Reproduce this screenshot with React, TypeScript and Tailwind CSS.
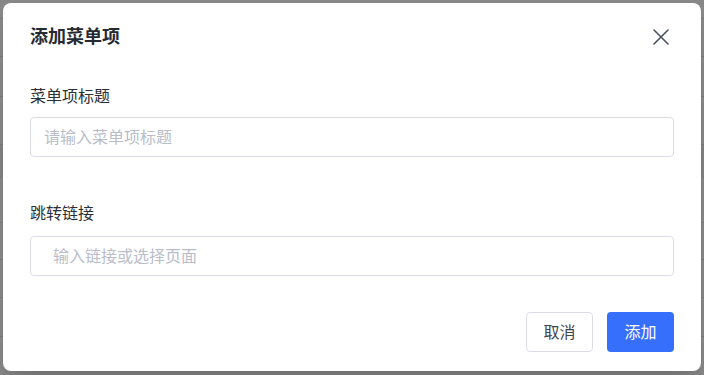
import { useState } from "react";

const font = { fontFamily: '"Inter", "Noto Sans CJK SC", sans-serif' };

function CloseIcon() {
  return (
    <svg width="16" height="16" viewBox="0 0 16 16" fill="none" stroke="currentColor" strokeWidth="1.6" strokeLinecap="round">
      <path d="M1 1L15 15M15 1L1 15" />
    </svg>
  );
}

export default function App() {
  const [title, setTitle] = useState("");
  const [link, setLink] = useState("");

  return (
    <div className="relative h-[375px] w-[704px] overflow-hidden bg-white" style={font}>
      {/* page behind the modal */}
      <div className="flex flex-col">
        <div className="h-[19px] border-b border-gray-200" />
        <div className="h-[38px] border-b border-gray-200" />
        <div className="h-[40px] border-b border-gray-200" />
        <div className="h-[48px] border-b border-gray-200" />
        <div className="h-[33px] bg-gray-100 border-b border-gray-200" />
        <div className="h-[45px] border-b border-gray-200" />
        <div className="h-[37px] border-b border-gray-200" />
        <div className="h-[38px] border-b border-gray-200" />
        <div className="h-[39px] border-b border-gray-200" />
      </div>
      <div className="absolute inset-0 bg-black/[0.47]" />

      <div className="absolute inset-0 p-[3px] pb-[4px]">
        <div className="flex h-full flex-col rounded-lg bg-white px-[27px] pt-[20px] pb-[19px] shadow-xl">
          <div className="flex items-center justify-between">
            <h2 className="text-[18px] leading-[28px] font-bold text-[#262b33]">添加菜单项</h2>
            <button className="mr-[5px] text-[#4a5260]">
              <CloseIcon />
            </button>
          </div>

          <label className="mt-[33px] mb-[9px] text-[16px] leading-[24px] text-[#2b2f36]">菜单项标题</label>
          <input
            value={title}
            onChange={(e) => setTitle(e.target.value)}
            placeholder="请输入菜单项标题"
            className="h-[40px] w-full rounded-[4px] border border-[#dcdce6] px-[13px] text-[16px] text-[#2b2f36] outline-none placeholder:text-[#b9bdca]"
          />

          <label className="mt-[44px] mb-[11px] text-[16px] leading-[24px] text-[#2b2f36]">跳转链接</label>
          <input
            value={link}
            onChange={(e) => setLink(e.target.value)}
            placeholder="输入链接或选择页面"
            className="h-[40px] w-full rounded-[4px] border border-[#dcdce6] pl-[22px] pr-[13px] text-[16px] text-[#2b2f36] outline-none placeholder:text-[#b9bdca]"
          />

          <div className="mt-auto flex justify-end gap-[14px]">
            <button className="h-[40px] w-[67px] rounded-[4px] border border-[#dcdce6] bg-white text-[16px] text-[#3f4550]">取消</button>
            <button className="h-[40px] w-[67px] rounded-[4px] bg-[#356ffc] text-[16px] text-white">添加</button>
          </div>
        </div>
      </div>
    </div>
  );
}
